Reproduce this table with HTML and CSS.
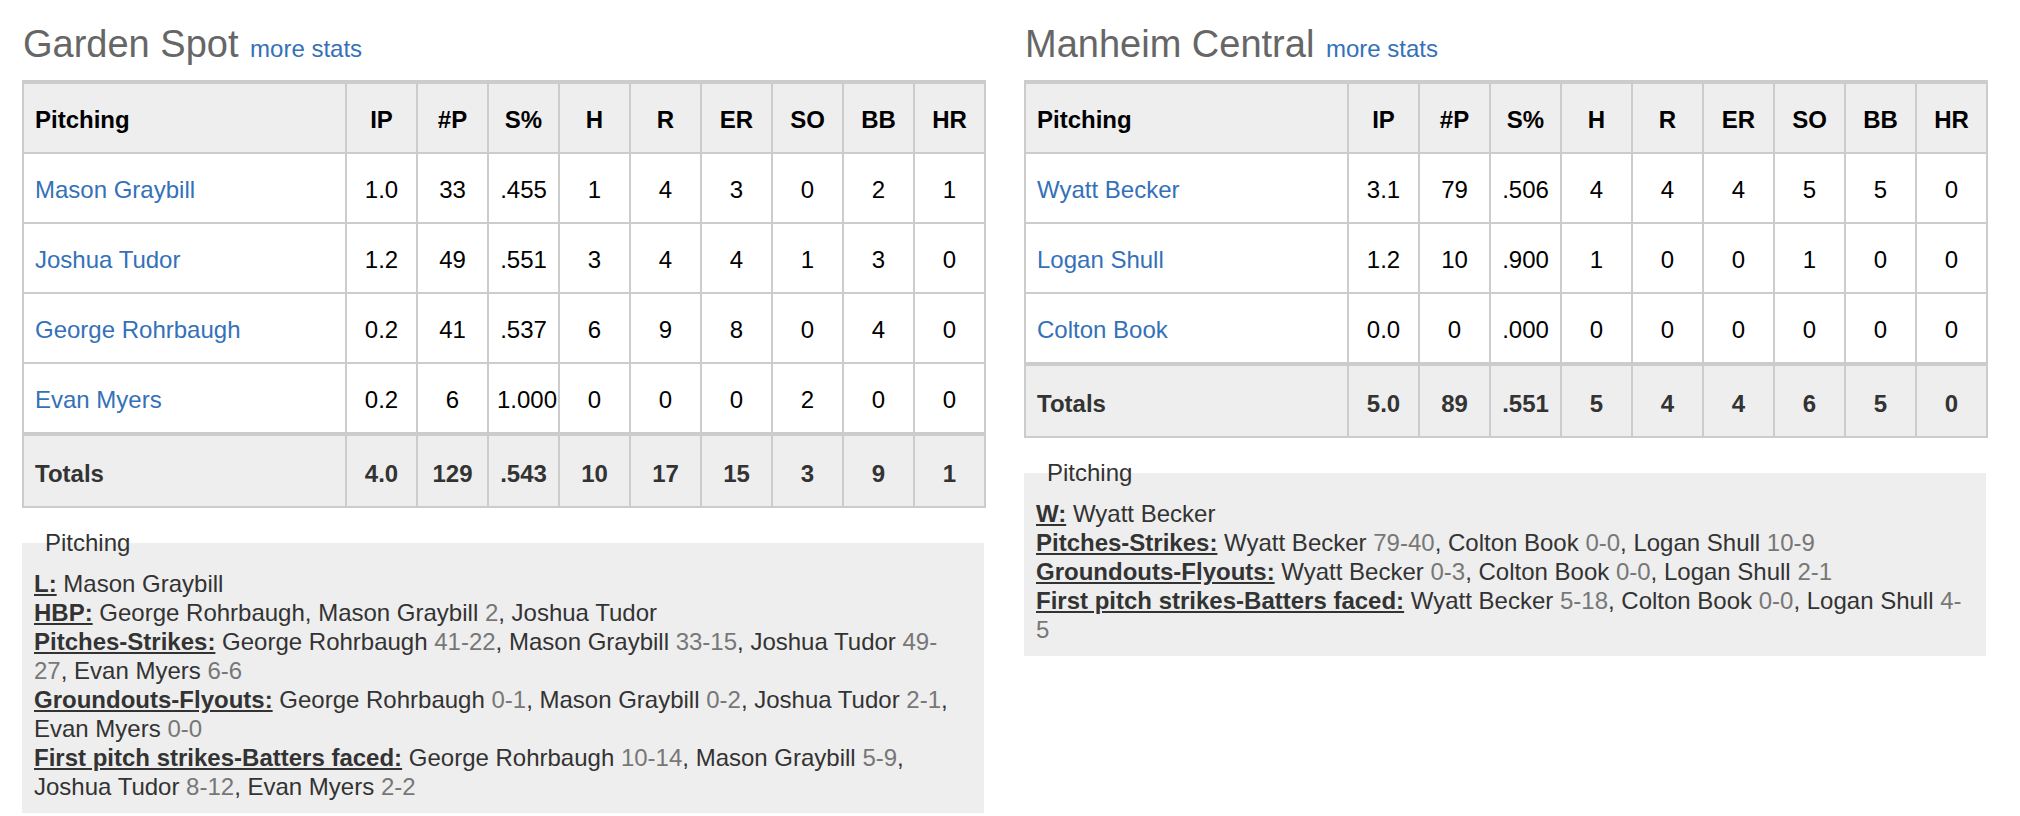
FILE: index.html
```html
<!DOCTYPE html>
<html>
<head>
<meta charset="utf-8">
<link rel="stylesheet" href="styles.css">
</head>
<body>
<div class="page">
  <section class="team">
    <h2 class="team-title">Garden Spot <a class="more" href="#">more stats</a></h2>
    <table class="box">
      <colgroup><col class="c-name"><col class="c-stat"><col class="c-stat"><col class="c-stat"><col class="c-stat"><col class="c-stat"><col class="c-stat"><col class="c-stat"><col class="c-stat"><col class="c-stat"></colgroup>
      <thead>
        <tr><th class="name">Pitching</th><th>IP</th><th>#P</th><th>S%</th><th>H</th><th>R</th><th>ER</th><th>SO</th><th>BB</th><th>HR</th></tr>
      </thead>
      <tbody>
        <tr><td class="name"><a href="#">Mason Graybill</a></td><td>1.0</td><td>33</td><td>.455</td><td>1</td><td>4</td><td>3</td><td>0</td><td>2</td><td>1</td></tr>
        <tr><td class="name"><a href="#">Joshua Tudor</a></td><td>1.2</td><td>49</td><td>.551</td><td>3</td><td>4</td><td>4</td><td>1</td><td>3</td><td>0</td></tr>
        <tr><td class="name"><a href="#">George Rohrbaugh</a></td><td>0.2</td><td>41</td><td>.537</td><td>6</td><td>9</td><td>8</td><td>0</td><td>4</td><td>0</td></tr>
        <tr><td class="name"><a href="#">Evan Myers</a></td><td>0.2</td><td>6</td><td>1.000</td><td>0</td><td>0</td><td>0</td><td>2</td><td>0</td><td>0</td></tr>
      </tbody>
      <tfoot>
        <tr><td class="name">Totals</td><td>4.0</td><td>129</td><td>.543</td><td>10</td><td>17</td><td>15</td><td>3</td><td>9</td><td>1</td></tr>
      </tfoot>
    </table>
    <fieldset class="notes">
      <legend>Pitching</legend>
      <div class="line"><span class="lbl">L:</span> Mason Graybill</div>
      <div class="line"><span class="lbl">HBP:</span> George Rohrbaugh, Mason Graybill <span class="num">2</span>, Joshua Tudor</div>
      <div class="line"><span class="lbl">Pitches-Strikes:</span> George Rohrbaugh <span class="num">41-22</span>, Mason Graybill <span class="num">33-15</span>, Joshua Tudor <span class="num">49-27</span>, Evan Myers <span class="num">6-6</span></div>
      <div class="line"><span class="lbl">Groundouts-Flyouts:</span> George Rohrbaugh <span class="num">0-1</span>, Mason Graybill <span class="num">0-2</span>, Joshua Tudor <span class="num">2-1</span>, Evan Myers <span class="num">0-0</span></div>
      <div class="line"><span class="lbl">First pitch strikes-Batters faced:</span> George Rohrbaugh <span class="num">10-14</span>, Mason Graybill <span class="num">5-9</span>, Joshua Tudor <span class="num">8-12</span>, Evan Myers <span class="num">2-2</span></div>
    </fieldset>
  </section>
  <section class="team">
    <h2 class="team-title">Manheim Central <a class="more" href="#">more stats</a></h2>
    <table class="box">
      <colgroup><col class="c-name"><col class="c-stat"><col class="c-stat"><col class="c-stat"><col class="c-stat"><col class="c-stat"><col class="c-stat"><col class="c-stat"><col class="c-stat"><col class="c-stat"></colgroup>
      <thead>
        <tr><th class="name">Pitching</th><th>IP</th><th>#P</th><th>S%</th><th>H</th><th>R</th><th>ER</th><th>SO</th><th>BB</th><th>HR</th></tr>
      </thead>
      <tbody>
        <tr><td class="name"><a href="#">Wyatt Becker</a></td><td>3.1</td><td>79</td><td>.506</td><td>4</td><td>4</td><td>4</td><td>5</td><td>5</td><td>0</td></tr>
        <tr><td class="name"><a href="#">Logan Shull</a></td><td>1.2</td><td>10</td><td>.900</td><td>1</td><td>0</td><td>0</td><td>1</td><td>0</td><td>0</td></tr>
        <tr><td class="name"><a href="#">Colton Book</a></td><td>0.0</td><td>0</td><td>.000</td><td>0</td><td>0</td><td>0</td><td>0</td><td>0</td><td>0</td></tr>
      </tbody>
      <tfoot>
        <tr><td class="name">Totals</td><td>5.0</td><td>89</td><td>.551</td><td>5</td><td>4</td><td>4</td><td>6</td><td>5</td><td>0</td></tr>
      </tfoot>
    </table>
    <fieldset class="notes">
      <legend>Pitching</legend>
      <div class="line"><span class="lbl">W:</span> Wyatt Becker</div>
      <div class="line"><span class="lbl">Pitches-Strikes:</span> Wyatt Becker <span class="num">79-40</span>, Colton Book <span class="num">0-0</span>, Logan Shull <span class="num">10-9</span></div>
      <div class="line"><span class="lbl">Groundouts-Flyouts:</span> Wyatt Becker <span class="num">0-3</span>, Colton Book <span class="num">0-0</span>, Logan Shull <span class="num">2-1</span></div>
      <div class="line"><span class="lbl">First pitch strikes-Batters faced:</span> Wyatt Becker <span class="num">5-18</span>, Colton Book <span class="num">0-0</span>, Logan Shull <span class="num">4-5</span></div>
    </fieldset>
  </section>
</div>
</body>
</html>
```

FILE: styles.css
```css
html, body {
  margin: 0;
  padding: 0;
  background: #fff;
}

body {
  font-family: "Liberation Sans", Arial, Helvetica, sans-serif;
  font-size: 24px;
  color: #333;
}

.page {
  display: grid;
  grid-template-columns: 962px 962px;
  column-gap: 40px;
  align-items: start;
  padding: 22px 0 0 22px;
}

.team-title {
  margin: 0 0 9px 1px;
  font-size: 38px;
  line-height: 44px;
  font-weight: normal;
  color: #666;
  white-space: nowrap;
}

.more {
  font-size: 24px;
  color: #3471b8;
  text-decoration: none;
  margin-left: 1px;
}

.box {
  width: 100%;
  table-layout: fixed;
  border-collapse: collapse;
  border: 2px solid #ccc;
}

.c-name { width: 323px; }
.c-stat { width: 71px; }

.box th,
.box td {
  border: 2px solid #ccc;
  padding: 22px 8px 18px;
  line-height: 28px;
  text-align: center;
  white-space: nowrap;
  color: #000;
}

.box th {
  background: #eee;
  font-weight: bold;
  border-top-width: 4px;
}

.box .name {
  text-align: left;
  padding-left: 11px;
}

.box td.name a {
  color: #3471b8;
  text-decoration: none;
}

.box tfoot td {
  background: #eee;
  font-weight: bold;
  color: #333;
  border-top-width: 4px;
  padding-top: 24px;
  padding-bottom: 18px;
}

.notes {
  margin: 20px 0 0;
  border: 0;
  padding: 12px 24px 12px 12px;
  background: #eee;
  min-width: 0;
}

.notes legend {
  padding: 0 11px;
  line-height: 29px;
  color: #333;
}

.line {
  line-height: 29px;
  color: #333;
}

.lbl {
  font-weight: bold;
  text-decoration: underline;
}

.num {
  color: #777;
}
```
